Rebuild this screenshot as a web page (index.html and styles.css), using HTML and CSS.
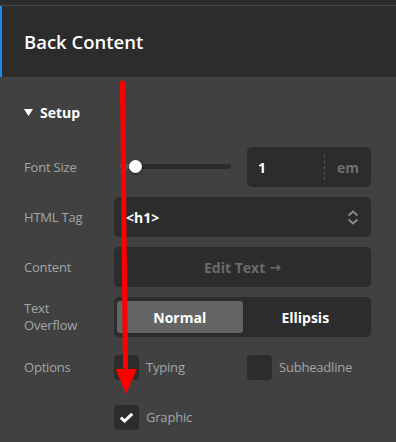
FILE: index.html
```html
<!DOCTYPE html>
<html>
<head>
<meta charset="utf-8">
<link rel="stylesheet" href="styles.css">
</head>
<body>
<div class="app">
  <div class="topstrip"></div>
  <header class="header"><h1 class="title">Back Content</h1></header>
  <section class="panel">
    <div class="section-head">
      <svg class="caret" width="9" height="7" viewBox="0 0 9 7"><polygon points="0,0 9,0 4.5,7" fill="#fff"/></svg>
      <span>Setup</span>
    </div>
    <div class="form">
      <div class="label">Font Size</div>
      <div class="split">
        <div class="slider">
          <div class="track"><div class="fill"></div></div>
          <div class="thumb"></div>
        </div>
        <div class="field num">
          <span class="val">1</span>
          <span class="unit">em</span>
        </div>
      </div>

      <div class="label">HTML Tag</div>
      <div class="field select">
        <span class="val">&lt;h1&gt;</span>
        <svg class="chev" width="12" height="15" viewBox="0 0 12 15"><polyline points="1.5,5.5 6,1.5 10.5,5.5" fill="none" stroke="#8c8c8c" stroke-width="1.8"/><polyline points="1.5,9.5 6,13.5 10.5,9.5" fill="none" stroke="#8c8c8c" stroke-width="1.8"/></svg>
      </div>

      <div class="label">Content</div>
      <div class="field button">Edit Text <span class="arrow">→</span></div>

      <div class="label two">Text<br>Overflow</div>
      <div class="field seg">
        <div class="opt active">Normal</div>
        <div class="opt">Ellipsis</div>
      </div>

      <div class="label">Options</div>
      <div class="split">
        <label class="check"><span class="box"></span><span>Typing</span></label>
        <label class="check"><span class="box"></span><span>Subheadline</span></label>
      </div>

      <div class="label"></div>
      <div class="split">
        <label class="check"><span class="box on"><svg width="15" height="11" viewBox="0 0 15 11"><polyline points="1.8,5.6 5.6,9 13.2,1.8" fill="none" stroke="#fff" stroke-width="3"/></svg></span><span>Graphic</span></label>
      </div>
    </div>
  </section>
  <svg class="annot" width="396" height="442" viewBox="0 0 396 442">
    <line x1="122.5" y1="83" x2="125.5" y2="372" stroke="#ff0000" stroke-width="5" stroke-linecap="round"/>
    <polygon points="115.5,369 137,369 126,394" fill="#ff0000"/>
  </svg>
</div>
</body>
</html>
```
FILE: styles.css
```css
* { box-sizing: border-box; }
html, body { margin: 0; padding: 0; }
body {
  background: #414141;
  font-family: "Open Sans", "Noto Sans", sans-serif;
  color: #fff;
  width: 396px;
  height: 442px;
  overflow: hidden;
}
.app { position: relative; height: 442px; }
.topstrip {
  height: 6px;
  background: #2b2b2b;
  border-bottom: 1px solid #454545;
}
.header {
  height: 71px;
  background: #2c2c2c;
  border-left: 2px solid #1a8cf0;
  display: flex;
  align-items: center;
  padding-left: 22px;
}
.title {
  margin: 0;
  font-size: 18.5px;
  font-weight: 600;
  color: #fff;
}
.panel {
  padding: 0 25px 0 24px;
}
.section-head {
  height: 70px;
  display: flex;
  align-items: center;
  gap: 7px;
  font-size: 14px;
  font-weight: 700;
  color: #fff;
}
.caret { margin-top: 1px; }
.form {
  display: grid;
  grid-template-columns: 90px 1fr;
  grid-auto-rows: 40px;
  row-gap: 10px;
}
.label {
  display: flex;
  align-items: center;
  font-size: 13px;
  color: #a2a6aa;
  line-height: 17px;
  letter-spacing: -0.2px;
}
.split {
  display: grid;
  grid-template-columns: 1fr 1fr;
  column-gap: 9px;
  align-items: center;
}
.field {
  background: #2c2c2c;
  border-radius: 5px;
  height: 40px;
  display: flex;
  align-items: center;
  font-size: 14px;
  font-weight: 700;
}
.slider {
  position: relative;
  height: 40px;
  display: flex;
  align-items: center;
  padding: 0 7px 0 6px;
}
.track {
  flex: 1;
  height: 5px;
  background: #2b2b2b;
  border-radius: 3px;
  margin-top: -1px;
}
.fill {
  width: 14px;
  height: 5px;
  background: #5a5a5a;
  border-radius: 3px;
}
.thumb {
  position: absolute;
  left: 15px;
  top: 13px;
  width: 13px;
  height: 13px;
  border-radius: 50%;
  background: #fff;
  box-shadow: 0 1px 3px rgba(0,0,0,0.5);
}
.num {
  padding: 0 12px 0 11px;
}
.num .val { flex: 1; }
.unit {
  color: #6f6f6f;
  border-left: 1px dashed #555;
  height: 25px;
  display: flex;
  align-items: center;
  padding-left: 12px;
}
.select {
  justify-content: space-between;
  padding: 0 12px 0 12px;
}
.button {
  justify-content: center;
  color: #6a6a6a;
  gap: 4px;
}
.arrow {
  font-family: "DejaVu Sans", sans-serif;
  font-weight: 700;
  font-size: 14px;
}
.seg {
  padding: 4px 3px;
  gap: 0;
}
.opt {
  flex: 1;
  height: 32px;
  display: flex;
  align-items: center;
  justify-content: center;
  border-radius: 3px;
  color: #fff;
}
.opt.active { background: #646464; }
.check {
  display: flex;
  align-items: center;
  gap: 7px;
  font-size: 13px;
  color: #a2a6aa;
  letter-spacing: -0.2px;
}
.box {
  width: 25px;
  height: 25px;
  border-radius: 4px;
  background: #2c2c2c;
  display: flex;
  align-items: center;
  justify-content: center;
  flex: none;
}
.annot {
  position: absolute;
  left: 0;
  top: 0;
  pointer-events: none;
}
```
